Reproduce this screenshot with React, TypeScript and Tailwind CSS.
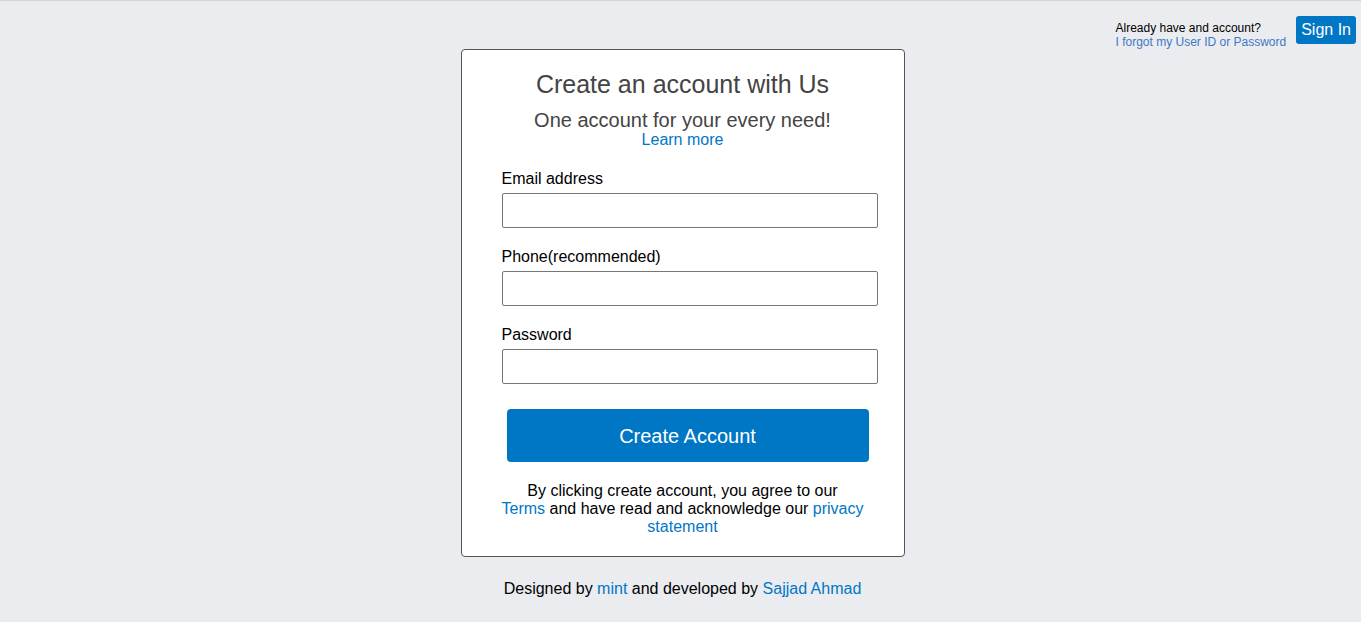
import React from 'react';

const Field = ({ label, type = 'text', first = false }: { label: string; type?: string; first?: boolean }) => (
  <div className={first ? 'mt-[20px]' : 'mt-[19px]'}>
    <label className="block pt-[1px] text-[16px] leading-[18px] text-black">{label}</label>
    <input
      type={type}
      className="mt-[5px] block h-[35px] w-[376px] rounded-[2px] border border-[#767676] bg-white px-2 text-[16px] outline-none"
    />
  </div>
);

const App = () => {
  return (
    <div
      className="min-h-screen border-t border-[#d3d4d8] bg-[#ebecf0] pb-[25px]"
      style={{ fontFamily: '"Liberation Sans", Arial, sans-serif' }}
    >
      <header className="flex h-[48px] items-start justify-end pr-[5px] pt-[15px]">
        <div className="mr-[10px] mt-[5px] text-[12px] leading-[14px]">
          <div className="text-black">Already have and account?</div>
          <a href="#" className="text-[#3d79c4]">I forgot my User ID or Password</a>
        </div>
        <button className="h-[28px] rounded-[3px] bg-[#0077c5] px-[5px] text-[16px] leading-[28px] text-white">
          Sign In
        </button>
      </header>

      <main className="flex flex-col items-center pl-[4px]">
        <div className="w-[444px] rounded-[4px] border border-[#555] bg-white pb-[20px] pt-[20px]">
          <div className="text-center">
            <h1 className="text-[25px] leading-[28px] text-[#444]">Create an account with Us</h1>
            <p className="mt-[11px] text-[20px] leading-[22px] text-[#444]">One account for your every need!</p>
            <a href="#" className="block text-[16px] leading-[18px] text-[#0077c5]">Learn more</a>
          </div>

          <form className="pl-[40px]" onSubmit={(e) => e.preventDefault()}>
            <Field label="Email address" type="email" first />
            <Field label="Phone(recommended)" type="tel" />
            <Field label="Password" type="password" />
            <button
              type="submit"
              className="ml-[5px] mt-[25px] h-[53px] w-[362px] rounded-[4px] bg-[#0077c5] text-[20px] text-white"
            >
              Create Account
            </button>
          </form>

          <p className="mx-auto mt-[20px] w-[380px] text-center text-[16px] leading-[18px] text-black">
            By clicking create account, you agree to our
            <br />
            <a href="#" className="text-[#0077c5]">Terms</a> and have read and acknowledge our{' '}
            <a href="#" className="text-[#0077c5]">privacy statement</a>
          </p>
        </div>

        <footer className="mt-[23px] text-[16px] leading-[18px] text-black">
          Designed by <a href="#" className="text-[#0077c5]">mint</a> and developed by{' '}
          <a href="#" className="text-[#0077c5]">Sajjad Ahmad</a>
        </footer>
      </main>
    </div>
  );
};

export default App;
